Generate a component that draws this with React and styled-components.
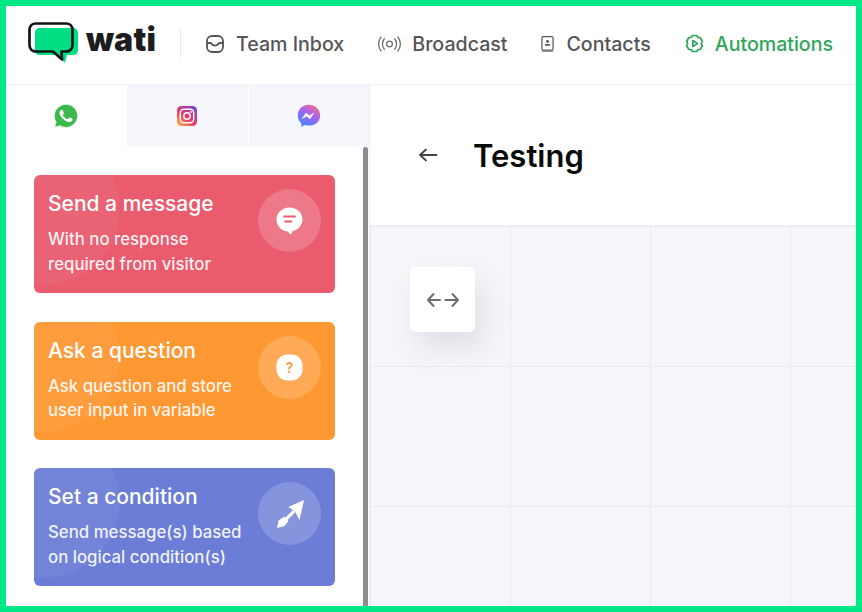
import React from 'react'
import styled, { createGlobalStyle } from 'styled-components'

const GlobalStyle = createGlobalStyle`
  html, body { margin: 0; padding: 0; background: #fff; }
  * { box-sizing: border-box; }
  body { font-family: Inter, "Liberation Sans", sans-serif; }
`

const Frame = styled.div`
  width: 862px;
  height: 612px;
  border: 6px solid #00e887;
  display: flex;
  flex-direction: column;
  overflow: hidden;
  background: #fff;
`

const Header = styled.header`
  height: 79px;
  flex: none;
  display: flex;
  align-items: center;
  padding: 0 0 3px 22px;
  border-bottom: 1px solid #f1f2f5;
`

const Logo = styled.div`
  display: flex;
  align-items: center;
  gap: 6px;
  width: 130px;
  margin-top: -2px;
  svg { display: block; flex: none; }
`

const LogoText = styled.span`
  font-size: 32px;
  font-weight: 900;
  letter-spacing: 0.2px;
  color: #1d1d1f;
  line-height: 1;
  margin-top: -5px;
`

const Divider = styled.div`
  width: 1px;
  height: 28px;
  background: #e6e7ea;
  margin: -2px 25px 0 22px;
`

const Nav = styled.nav`
  display: flex;
  align-items: center;
  gap: 34px;
`

const NavItem = styled.a`
  display: flex;
  align-items: center;
  gap: ${({ $gap }) => $gap || 12}px;
  font-size: 19.6px;
  font-weight: 500;
  color: ${({ $active }) => ($active ? '#2ea65a' : '#555557')};
  svg { display: block; flex: none; }
`

const Body = styled.div`
  flex: 1;
  display: flex;
  min-height: 0;
`

const Sidebar = styled.aside`
  width: 364px;
  flex: none;
  display: flex;
  flex-direction: column;
  border-right: 1px solid #eeeff2;
`

const Tabs = styled.div`
  display: flex;
  height: 62px;
  flex: none;
`

const Tab = styled.div`
  flex: 1;
  display: flex;
  align-items: center;
  justify-content: center;
  background: ${({ $active }) => ($active ? '#fff' : '#f6f7fc')};
  margin-left: ${({ $active }) => ($active ? 0 : 1)}px;
  svg { display: block; }
`

const SidebarBody = styled.div`
  flex: 1;
  display: flex;
  min-height: 0;
`

const CardList = styled.div`
  flex: 1;
  display: flex;
  flex-direction: column;
  gap: 28.5px;
  padding: 28px 28px 0 28px;
`

const Scrollbar = styled.div`
  width: 5px;
  flex: none;
  margin-right: 1px;
  background: #8c8c8e;
  border-radius: 3px 3px 0 0;
`

const Card = styled.div`
  height: 118px;
  flex: none;
  display: flex;
  justify-content: space-between;
  padding: 14px;
  border-radius: 6px;
  color: #fff;
  background:
    radial-gradient(circle 76px at 10px 34px, rgba(255, 255, 255, 0.05) 99%, transparent 100%),
    ${({ $bg }) => $bg};
`

const CardText = styled.div`
  display: flex;
  flex-direction: column;
`

const CardTitle = styled.div`
  font-size: 21px;
  font-weight: 500;
  line-height: 28px;
  margin-top: 1px;
`

const CardDesc = styled.div`
  font-size: 16.8px;
  font-weight: 500;
  line-height: 24.5px;
  margin-top: 9px;
  color: rgba(255, 255, 255, 0.92);
  white-space: pre-line;
`

const IconCircle = styled.div`
  width: 63px;
  height: 63px;
  flex: none;
  border-radius: 50%;
  background: rgba(255, 255, 255, 0.18);
  display: flex;
  align-items: center;
  justify-content: center;
  svg { display: block; }
`

const Main = styled.main`
  flex: 1;
  display: flex;
  flex-direction: column;
  min-width: 0;
`

const TitleBar = styled.div`
  height: 141px;
  flex: none;
  display: flex;
  align-items: center;
  gap: 35px;
  padding: 0 0 0 48px;
  border-bottom: 1px solid #eceef2;
`

const BackButton = styled.div`
  display: flex;
  svg { display: block; }
`

const PageTitle = styled.h1`
  margin: 0;
  font-size: 31px;
  font-weight: 600;
  color: #0a0a0b;
  line-height: 1;
`

const Canvas = styled.div`
  flex: 1;
  position: relative;
  background-color: #f5f6fa;
  background-image:
    linear-gradient(to left, #e9ebef 1px, transparent 1px),
    linear-gradient(to top, #e9ebef 1px, transparent 1px);
  background-size: 140px 140px;
  background-position: 1px 1px;
`

const ToggleButton = styled.div`
  position: absolute;
  left: 40px;
  top: 41px;
  width: 65px;
  height: 65px;
  border-radius: 6px;
  background: #fff;
  box-shadow: 8px 16px 30px rgba(60, 70, 90, 0.12);
  display: flex;
  align-items: center;
  justify-content: center;
  svg { display: block; }
`

const LogoMark = () => (
  <svg width="52" height="42" viewBox="0 0 52 42">
    <path d="M12 6h33c3 0 5 2 5 5v17c0 3-2 5-5 5h-6l-2 8-8-8H12c-3 0-5-2-5-5V11c0-3 2-5 5-5z" fill="#00dd83" />
    <path d="M8 1.500h30c3.800 0 6.500 2.700 6.500 6.500v15c0 3.800-2.700 6.500-6.500 6.500h-4.500l.5 8-9-8H8c-3.800 0-6.500-2.700-6.500-6.500V8c0-3.800 2.700-6.500 6.500-6.500z" fill="none" stroke="#151517" strokeWidth="2.700" strokeLinejoin="round" />
  </svg>
)

const InboxIcon = () => (
  <svg width="18" height="18" viewBox="0 0 18 18" fill="none" stroke="#555557" strokeWidth="1.800" strokeLinecap="round" strokeLinejoin="round">
    <rect x="1" y="1" width="16" height="16" rx="5" />
    <path d="M1 8h3.500c1 0 1.500 2.600 4.500 2.600S12.500 8 13.500 8H17" />
  </svg>
)

const BroadcastIcon = () => (
  <svg width="23" height="18" viewBox="0 0 24 18" fill="none" stroke="#68686a" strokeWidth="1.300" strokeLinecap="round">
    <circle cx="12" cy="9" r="3" />
    <path d="M6.600 3.500C4 6.500 4 11.500 6.600 14.500M17.400 3.500c2.600 3 2.600 8 0 11" />
    <path d="M3.300 1.500C-.2 5.500-.2 12.500 3.300 16.500M20.700 1.500c3.500 4 3.500 11 0 15" />
  </svg>
)

const ContactsIcon = () => (
  <svg width="13" height="18" viewBox="0 0 14 18" fill="none">
    <rect x="1" y="1" width="12" height="14.500" rx="1.500" stroke="#555557" strokeWidth="1.300" />
    <path d="M.8 16.800h12.400" stroke="#8a8a8c" strokeWidth="1.500" />
    <circle cx="7" cy="6.300" r="1.500" fill="#555557" />
    <rect x="4.200" y="9.100" width="5.600" height="1.700" rx=".8" fill="#555557" />
  </svg>
)

const AutomationIcon = () => (
  <svg width="19" height="19" viewBox="0 0 19 19" fill="none" stroke="#2ea65a" strokeWidth="1.700" strokeLinejoin="round">
    <path d="M7.400 1.500h4.200l1.300 2 2.400.2 2.100 3.500-1.100 2.300 1.100 2.300-2.100 3.500-2.400.2-1.300 2H7.400l-1.300-2-2.400-.2-2.100-3.500 1.100-2.300-1.100-2.300 2.100-3.500 2.400-.2z" />
    <path d="M7.800 6.500l4.500 3-4.500 3z" />
  </svg>
)

const WhatsappIcon = () => (
  <svg width="26" height="26" viewBox="0 0 24 24">
    <path d="M12 .6C5.700.6.600 5.700.600 12c0 2.100.6 4.100 1.600 5.800L.6 23.400l5.800-1.500c1.700.9 3.600 1.500 5.600 1.500 6.300 0 11.400-5.100 11.400-11.400S18.300.6 12 .6z" fill="#e9efe9" />
    <path d="M12 1.600C6.300 1.600 1.700 6.200 1.700 12c0 2 .6 3.900 1.600 5.500l-1.100 4.200 4.400-1.100c1.600.9 3.400 1.500 5.400 1.500 5.700 0 10.300-4.600 10.300-10.300S17.700 1.600 12 1.600z" fill="#3cb94e" />
    <path d="M17.472 14.382c-.297-.149-1.758-.867-2.030-.967-.273-.099-.471-.148-.670.150-.197.297-.767.966-.940 1.164-.173.199-.347.223-.644.075-.297-.150-1.255-.463-2.390-1.475-.883-.788-1.480-1.761-1.653-2.059-.173-.297-.018-.458.130-.606.134-.133.298-.347.446-.520.149-.174.198-.298.298-.497.099-.198.050-.371-.025-.520-.075-.149-.669-1.612-.916-2.207-.242-.579-.487-.500-.669-.510-.173-.008-.371-.010-.570-.010-.198 0-.520.074-.792.372-.272.297-1.040 1.016-1.040 2.479 0 1.462 1.065 2.875 1.213 3.074.149.198 2.096 3.200 5.077 4.487.709.306 1.262.489 1.694.625.712.227 1.360.195 1.871.118.571-.085 1.758-.719 2.006-1.413.248-.694.248-1.289.173-1.413-.074-.124-.272-.198-.570-.347" fill="#fff" />
  </svg>
)

const InstagramIcon = () => (
  <svg width="20" height="20" viewBox="0 0 20 20" fill="none">
    <defs>
      <linearGradient id="ig" x1="0.1" y1="1" x2="0.9" y2="0">
        <stop offset="0" stopColor="#fdb43c" />
        <stop offset="0.4" stopColor="#ea3f5e" />
        <stop offset="0.75" stopColor="#b73aa5" />
        <stop offset="1" stopColor="#5b4fd0" />
      </linearGradient>
    </defs>
    <rect width="20" height="20" rx="4.500" fill="url(#ig)" />
    <rect x="3.300" y="3.300" width="13.400" height="13.400" rx="3.600" stroke="#fff" strokeWidth="1.400" />
    <circle cx="10" cy="10" r="3.200" stroke="#fff" strokeWidth="1.400" />
    <circle cx="14" cy="6" r=".9" fill="#fff" />
  </svg>
)

const MessengerIcon = () => (
  <svg width="24" height="24" viewBox="0 0 24 24">
    <defs>
      <linearGradient id="ms" x1="0.2" y1="1" x2="0.8" y2="0">
        <stop offset="0" stopColor="#3d8bff" />
        <stop offset="0.55" stopColor="#a262f5" />
        <stop offset="1" stopColor="#fb6a80" />
      </linearGradient>
    </defs>
    <path d="M12 .8C5.600.8.800 5.400.800 11.400c0 3.200 1.300 5.900 3.500 7.800v3.700l3.400-1.900c1.300.4 2.800.6 4.300.6 6.400 0 11.200-4.600 11.200-10.200S18.400.8 12 .8z" fill="url(#ms)" />
    <path d="M5.200 14.800l3.800-5.700 3.600 2.700 4.200-2.700-3.800 5.700-3.600-2.700z" fill="#fff" stroke="#fff" strokeWidth=".6" strokeLinejoin="round" />
  </svg>
)

const MessageGlyph = () => (
  <svg width="27" height="28" viewBox="0 0 27 28">
    <path d="M13.500.5C6 .5.500 5.800.500 12.500S6 24.500 12 24.500c.5 1 1.700 2.700 3 2.700 1.100 0 .9-1.700 1.100-2.900 5.900-1.200 10.400-6 10.400-11.800C26.500 5.800 21 .5 13.500.5z" fill="#fff" />
    <path d="M8 9.500h11" stroke="#e95b6d" strokeWidth="1.800" strokeLinecap="round" />
    <path d="M9 14.500h6.500" stroke="#e95b6d" strokeWidth="1.800" strokeLinecap="round" />
  </svg>
)

const QuestionGlyph = () => (
  <svg width="27" height="27" viewBox="0 0 27 27">
    <rect x=".5" y=".5" width="26" height="26" rx="11" fill="#fff" />
    <text x="13.500" y="18.500" textAnchor="middle" fontFamily="Inter, sans-serif" fontSize="14" fontWeight="700" fill="#f9a04a">?</text>
  </svg>
)

const ConditionGlyph = () => (
  <svg width="30" height="30" viewBox="0 0 30 30" fill="#fff">
    <path d="M29 1L24.500 21 20 12.500 13.500 8z" />
    <path d="M18 11l2.200 2.200-8 8-2.200-2.200z" />
    <path d="M9.500 17.500l4 4.500-4 5-7.500 2 1.500-7.500z" />
  </svg>
)

const cards = [
  { title: 'Send a message', desc: 'With no response\nrequired from visitor', bg: '#e95b6d', glyph: <MessageGlyph /> },
  { title: 'Ask a question', desc: 'Ask question and store\nuser input in variable', bg: '#fe9833', glyph: <QuestionGlyph /> },
  { title: 'Set a condition', desc: 'Send message(s) based\non logical condition(s)', bg: '#6b7dd6', glyph: <ConditionGlyph /> },
]

const App = () => (
  <Frame>
    <GlobalStyle />
    <Header>
      <Logo>
        <LogoMark />
        <LogoText>wati</LogoText>
      </Logo>
      <Divider />
      <Nav>
        <NavItem><InboxIcon />Team Inbox</NavItem>
        <NavItem $gap={11}><BroadcastIcon />Broadcast</NavItem>
        <NavItem><ContactsIcon />Contacts</NavItem>
        <NavItem $gap={11} $active><AutomationIcon />Automations</NavItem>
      </Nav>
    </Header>
    <Body>
      <Sidebar>
        <Tabs>
          <Tab $active><WhatsappIcon /></Tab>
          <Tab><InstagramIcon /></Tab>
          <Tab><MessengerIcon /></Tab>
        </Tabs>
        <SidebarBody>
          <CardList>
            {cards.map((card) => (
              <Card key={card.title} $bg={card.bg}>
                <CardText>
                  <CardTitle>{card.title}</CardTitle>
                  <CardDesc>{card.desc}</CardDesc>
                </CardText>
                <IconCircle>{card.glyph}</IconCircle>
              </Card>
            ))}
          </CardList>
          <Scrollbar />
        </SidebarBody>
      </Sidebar>
      <Main>
        <TitleBar>
          <BackButton>
            <svg width="20" height="16" viewBox="0 0 20 16" fill="none" stroke="#444446" strokeWidth="1.800" strokeLinecap="round" strokeLinejoin="round">
              <path d="M18.500 8H2M8 2.500L2 8l6 5.500" />
            </svg>
          </BackButton>
          <PageTitle>Testing</PageTitle>
        </TitleBar>
        <Canvas>
          <ToggleButton>
            <svg width="34" height="16" viewBox="0 0 34 16" fill="none" stroke="#6e6e70" strokeWidth="2" strokeLinecap="round" strokeLinejoin="round">
              <path d="M14 8H2M7.500 2L2 8l5.500 6M19.500 8H32M26.500 2L32 8l-5.500 6" />
            </svg>
          </ToggleButton>
        </Canvas>
      </Main>
    </Body>
  </Frame>
)

export default App
